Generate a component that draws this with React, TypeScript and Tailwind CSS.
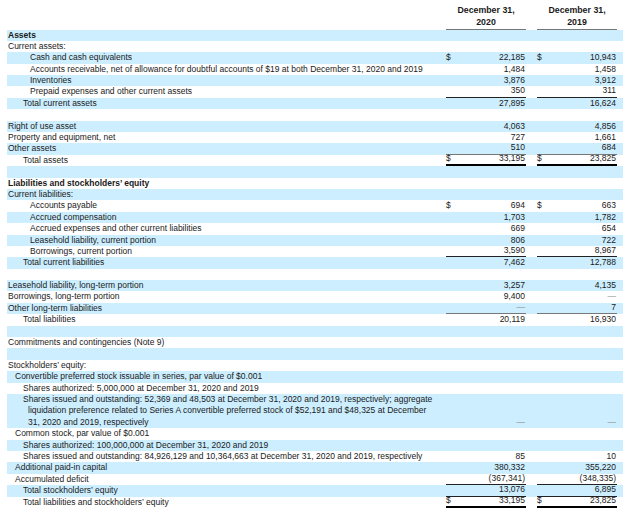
type Row = {
  label?: string[];
  indent?: number;
  bold?: boolean;
  a?: string;
  b?: string;
  dollar?: boolean;
  line?: "thin" | "gray" | "double";
};

const indents: Record<number, string> = {
  0: "pl-[1px]",
  1: "pl-[8px]",
  2: "pl-[16px]",
  3: "pl-[23px]",
};

const rows: Row[] = [
  { label: ["Assets"], bold: true },
  { label: ["Current assets:"] },
  { label: ["Cash and cash equivalents"], indent: 3, a: "22,185", b: "10,943", dollar: true },
  { label: ["Accounts receivable, net of allowance for doubtful accounts of $19 at both December 31, 2020 and 2019"], indent: 3, a: "1,484", b: "1,458" },
  { label: ["Inventories"], indent: 3, a: "3,876", b: "3,912" },
  { label: ["Prepaid expenses and other current assets"], indent: 3, a: "350", b: "311", line: "thin" },
  { label: ["Total current assets"], indent: 2, a: "27,895", b: "16,624" },
  {},
  { label: ["Right of use asset"], a: "4,063", b: "4,856" },
  { label: ["Property and equipment, net"], a: "727", b: "1,661" },
  { label: ["Other assets"], a: "510", b: "684", line: "gray" },
  { label: ["Total assets"], indent: 2, a: "33,195", b: "23,825", dollar: true, line: "double" },
  {},
  { label: ["Liabilities and stockholders’ equity"], bold: true },
  { label: ["Current liabilities:"] },
  { label: ["Accounts payable"], indent: 3, a: "694", b: "663", dollar: true },
  { label: ["Accrued compensation"], indent: 3, a: "1,703", b: "1,782" },
  { label: ["Accrued expenses and other current liabilities"], indent: 3, a: "669", b: "654" },
  { label: ["Leasehold liability, current portion"], indent: 3, a: "806", b: "722" },
  { label: ["Borrowings, current portion"], indent: 3, a: "3,590", b: "8,967", line: "thin" },
  { label: ["Total current liabilities"], indent: 2, a: "7,462", b: "12,788" },
  {},
  { label: ["Leasehold liability, long-term portion"], a: "3,257", b: "4,135" },
  { label: ["Borrowings, long-term portion"], a: "9,400", b: "—" },
  { label: ["Other long-term liabilities"], a: "—", b: "7", line: "gray" },
  { label: ["Total liabilities"], indent: 2, a: "20,119", b: "16,930" },
  {},
  { label: ["Commitments and contingencies (Note 9)"] },
  {},
  { label: ["Stockholders’ equity:"] },
  { label: ["Convertible preferred stock issuable in series, par value of $0.001"], indent: 1 },
  { label: ["Shares authorized: 5,000,000 at December 31, 2020 and 2019"], indent: 2 },
  {
    label: [
      "Shares issued and outstanding: 52,369 and 48,503 at December 31, 2020 and 2019, respectively; aggregate",
      "liquidation preference related to Series A convertible preferred stock of $52,191 and $48,325 at December",
      "31, 2020 and 2019, respectively",
    ],
    indent: 2,
    a: "—",
    b: "—",
  },
  { label: ["Common stock, par value of $0.001"], indent: 1 },
  { label: ["Shares authorized: 100,000,000 at December 31, 2020 and 2019"], indent: 2 },
  { label: ["Shares issued and outstanding: 84,926,129 and 10,364,663 at December 31, 2020 and 2019, respectively"], indent: 2, a: "85", b: "10" },
  { label: ["Additional paid-in capital"], indent: 1, a: "380,332", b: "355,220" },
  { label: ["Accumulated deficit"], indent: 1, a: "(367,341)", b: "(348,335)", line: "thin" },
  { label: ["Total stockholders’ equity"], indent: 2, a: "13,076", b: "6,895", line: "thin" },
  { label: ["Total liabilities and stockholders’ equity"], indent: 2, a: "33,195", b: "23,825", dollar: true, line: "double" },
];

const lineClass = {
  thin: "border-b border-[#222]",
  gray: "border-b-[1.5px] border-[#777]",
  double: "border-b-[2.5px] border-black",
};

function Cell({ value, dollar, line }: { value?: string; dollar?: boolean; line?: Row["line"] }) {
  const dash = value === "—";
  return (
    <div className={`w-[80px] flex items-end justify-between ${line ? lineClass[line] : ""}`}>
      <span>{dollar ? "$" : ""}</span>
      <span className={dash ? "text-[#888] pr-[1px]" : "pr-[1px]"}>{value}</span>
    </div>
  );
}

export default function App() {
  return (
    <div
      className="w-[640px] h-[514px] bg-white text-[#1a1a1a] overflow-hidden text-[8.5px]"
      style={{ fontFamily: '"Liberation Sans", Arial, sans-serif' }}
    >
      <div className="ml-[7px] w-[616px]">
        {/* Header */}
        <div className="flex h-[29.5px]">
          <div className="flex-1" />
          <div className="w-[80px] border-b-[1.5px] border-[#777] font-bold text-center text-[8.8px] leading-[12px] pt-[4px]">
            <div>December 31,</div>
            <div>2020</div>
          </div>
          <div className="w-[11px]" />
          <div className="w-[80px] border-b-[1.5px] border-[#777] font-bold text-center text-[8.8px] leading-[12px] pt-[4px]">
            <div>December 31,</div>
            <div>2019</div>
          </div>
          <div className="w-[6px]" />
        </div>

        {rows.map((r, i) => {
          const lines = r.label?.length ?? 1;
          return (
            <div
              key={i}
              className={`flex leading-[11.4px] ${i % 2 === 0 ? "bg-[#cceeff]" : "bg-white"}`}
              style={{ height: `${lines * 11.4}px` }}
            >
              <div className={`flex-1 whitespace-nowrap ${indents[r.indent ?? 0]} ${r.bold ? "font-bold" : ""}`}>
                {r.label?.map((t, j) => (
                  <div key={j} className={j > 0 ? "pl-[5px]" : ""}>
                    {t}
                  </div>
                ))}
              </div>
              <Cell value={r.a} dollar={r.dollar} line={r.line} />
              <div className="w-[11px]" />
              <Cell value={r.b} dollar={r.dollar} line={r.line} />
              <div className="w-[6px]" />
            </div>
          );
        })}
      </div>
    </div>
  );
}
